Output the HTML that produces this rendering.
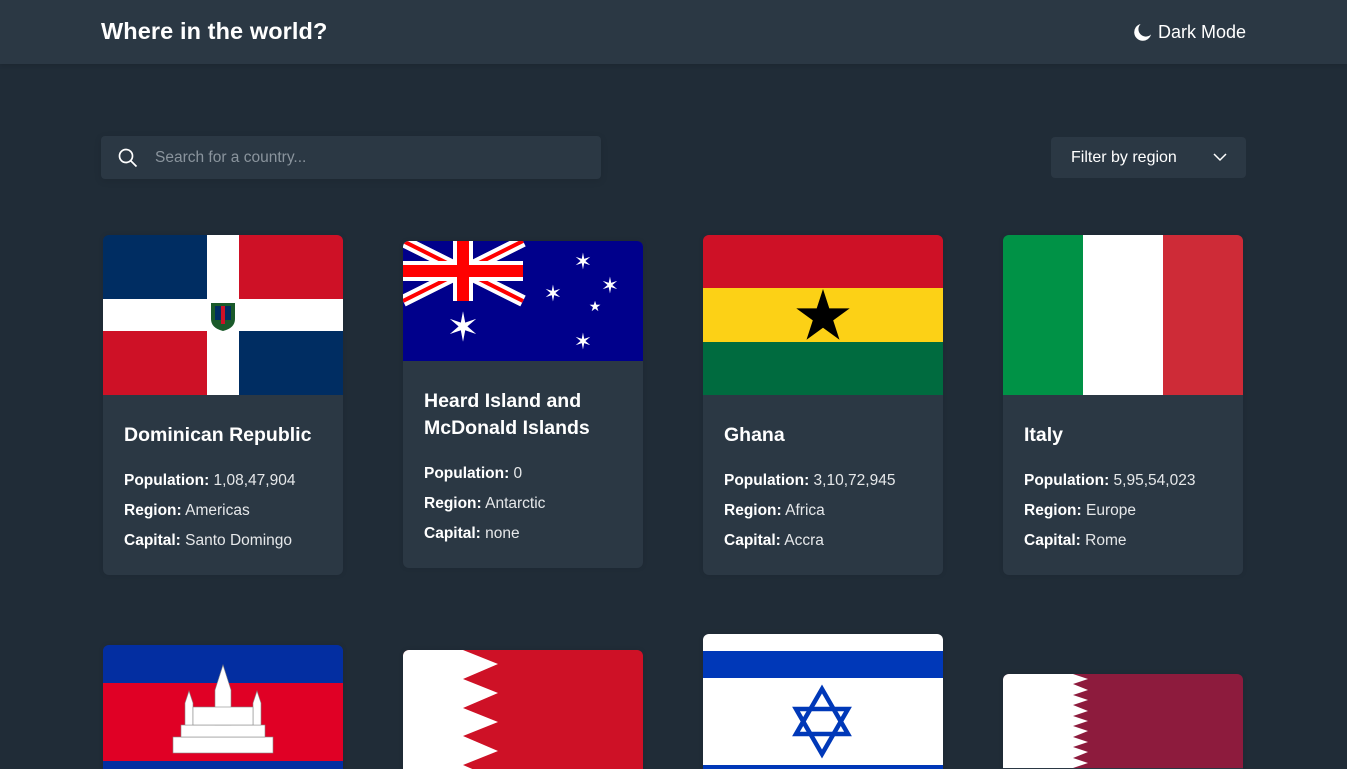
<!DOCTYPE html>
<html><head><meta charset="utf-8"><style>
*{margin:0;padding:0;box-sizing:border-box}
html,body{width:1347px;height:769px;overflow:hidden}
body{background:#202c37;font-family:"Liberation Sans",sans-serif;color:#fff;position:relative}
.hdr{position:absolute;left:0;top:0;width:1347px;height:64px;background:#2b3844;box-shadow:0 2px 4px rgba(0,0,0,.1)}
.hdr h1{position:absolute;left:101px;top:18px;font-size:23.5px;font-weight:bold;letter-spacing:0.1px}
.dm{position:absolute;right:101px;top:22px;font-size:18px;display:flex;align-items:center;gap:6px}
.search{position:absolute;left:101px;top:136px;width:500px;height:43px;background:#2b3844;border-radius:4px;box-shadow:0 2px 8px rgba(0,0,0,.1)}
.search span{position:absolute;left:54px;top:13px;font-size:15.5px;color:#8a949d}
.filter{position:absolute;left:1051px;top:137px;width:195px;height:41px;background:#2b3844;border-radius:4px}
.filter span{position:absolute;left:20px;top:12px;font-size:16px;color:#fff}
.card{position:absolute;width:240px;background:#2b3844;border-radius:6px;overflow:hidden;box-shadow:0 0 6px rgba(0,0,0,.08)}
.card svg{display:block}
.body{padding:27px 21px 19px}
.body h2{font-size:19.5px;font-weight:bold;line-height:27px;margin-bottom:17px}
.body p{font-size:15.5px;line-height:30px;color:#e6e8ea}
.body b{color:#fff}
</style></head><body>
<div class="hdr"><h1>Where in the world?</h1>
<div class="dm"><svg width="19" height="19" viewBox="0 0 20 20"><path d="M8 1A9 9 0 1 0 19 12 7 7 0 0 1 8 1Z" fill="#fff"/></svg>Dark Mode</div></div>
<div class="search"><svg style="position:absolute;left:17px;top:12px" width="20" height="20" viewBox="0 0 20 20"><circle cx="8" cy="8" r="6.5" fill="none" stroke="#fff" stroke-width="1.7"/><path d="M13 13L18.5 18.5" stroke="#fff" stroke-width="1.7"/></svg><span>Search for a country...</span></div>
<div class="filter"><span>Filter by region</span><svg style="position:absolute;left:162px;top:16px" width="14" height="9" viewBox="0 0 14 9"><path d="M1 1l6 6 6-6" fill="none" stroke="#fff" stroke-width="1.5"/></svg></div>

<div class="card" style="left:103px;top:235px">
<svg width="240" height="160"><rect width="240" height="160" fill="#002d62"/><rect x="136" width="104" height="64" fill="#ce1126"/><rect y="96" width="104" height="64" fill="#ce1126"/><rect x="104" width="32" height="160" fill="#fff"/><rect y="64" width="240" height="32" fill="#fff"/><path d="M108 68h24v16q0 9-12 12q-12-3-12-12z" fill="#1a5a2a"/><rect x="112" y="71" width="16" height="14" fill="#002d62"/><rect x="118" y="71" width="4" height="18" fill="#ce1126"/></svg>
<div class="body"><h2>Dominican Republic</h2><p><b>Population:</b> 1,08,47,904</p><p><b>Region:</b> Americas</p><p><b>Capital:</b> Santo Domingo</p></div></div>

<div class="card" style="left:403px;top:241px">
<svg width="240" height="120"><rect width="240" height="120" fill="#00008b"/><path d="M0 0L120 60M120 0L0 60" stroke="#fff" stroke-width="12"/><path d="M0 0L120 60M120 0L0 60" stroke="#f00" stroke-width="4"/><path d="M60 0V60M0 30H120" stroke="#fff" stroke-width="20"/><path d="M60 0V60M0 30H120" stroke="#f00" stroke-width="12"/>
<g fill="#fff" font-size="22" text-anchor="middle"><text x="60" y="100" font-size="40">✶</text><text x="180" y="28">✶</text><text x="150" y="60">✶</text><text x="207" y="52">✶</text><text x="192" y="70" font-size="14">★</text><text x="180" y="108">✶</text></g></svg>
<div class="body"><h2>Heard Island and McDonald Islands</h2><p><b>Population:</b> 0</p><p><b>Region:</b> Antarctic</p><p><b>Capital:</b> none</p></div></div>

<div class="card" style="left:703px;top:235px">
<svg width="240" height="160"><rect width="240" height="54" fill="#ce1126"/><rect y="53" width="240" height="54" fill="#fcd116"/><rect y="107" width="240" height="53" fill="#006b3f"/><path d="M120 54L126.3 73.4 146.7 73.4 130.2 85.4 136.5 104.8 120 92.8 103.5 104.8 109.8 85.4 93.3 73.4 113.7 73.4Z" fill="#000"/></svg>
<div class="body"><h2>Ghana</h2><p><b>Population:</b> 3,10,72,945</p><p><b>Region:</b> Africa</p><p><b>Capital:</b> Accra</p></div></div>

<div class="card" style="left:1003px;top:235px">
<svg width="240" height="160"><rect width="80" height="160" fill="#009246"/><rect x="80" width="80" height="160" fill="#fff"/><rect x="160" width="80" height="160" fill="#ce2b37"/></svg>
<div class="body"><h2>Italy</h2><p><b>Population:</b> 5,95,54,023</p><p><b>Region:</b> Europe</p><p><b>Capital:</b> Rome</p></div></div>

<div class="card" style="left:103px;top:645px">
<svg width="240" height="156"><rect width="240" height="156" fill="#032ea1"/><rect y="38" width="240" height="78" fill="#e00025"/><g fill="#fff" stroke="#888" stroke-width="0.6"><rect x="70" y="92" width="100" height="16"/><rect x="78" y="80" width="84" height="12"/><path d="M82 80V58l4-12 4 12v22zM112 80V45l8-25 8 25v35zM150 80V58l4-12 4 12v22z"/><rect x="90" y="62" width="60" height="18"/></g></svg>
<div class="body"><h2>Cambodia</h2></div></div>

<div class="card" style="left:403px;top:650px">
<svg width="240" height="144"><rect width="240" height="144" fill="#ce1126"/><path d="M0 0H60L95 14 60 29 95 43 60 58 95 72 60 86 95 101 60 115 95 130 60 144H0Z" fill="#fff"/></svg>
<div class="body"><h2>Bahrain</h2></div></div>

<div class="card" style="left:703px;top:634px">
<svg width="240" height="176"><rect width="240" height="176" fill="#fff"/><rect y="17" width="240" height="27" fill="#0038b8"/><rect y="131" width="240" height="27" fill="#0038b8"/><g fill="none" stroke="#0038b8" stroke-width="4.5" stroke-linejoin="miter"><path d="M119 55L145 100H93Z"/><path d="M119 120L145 75H93Z"/></g></svg>
<div class="body"><h2>Israel</h2></div></div>

<div class="card" style="left:1003px;top:674px">
<svg width="240" height="94"><rect width="240" height="94" fill="#8d1b3d"/><path d="M0 0H70L85 5 70 10 85 16 70 21 85 26 70 31 85 37 70 42 85 47 70 52 85 57 70 63 85 68 70 73 85 78 70 84 85 89 70 94H0Z" fill="#fff"/></svg>
<div class="body"><h2>Qatar</h2></div></div>
</body></html>
